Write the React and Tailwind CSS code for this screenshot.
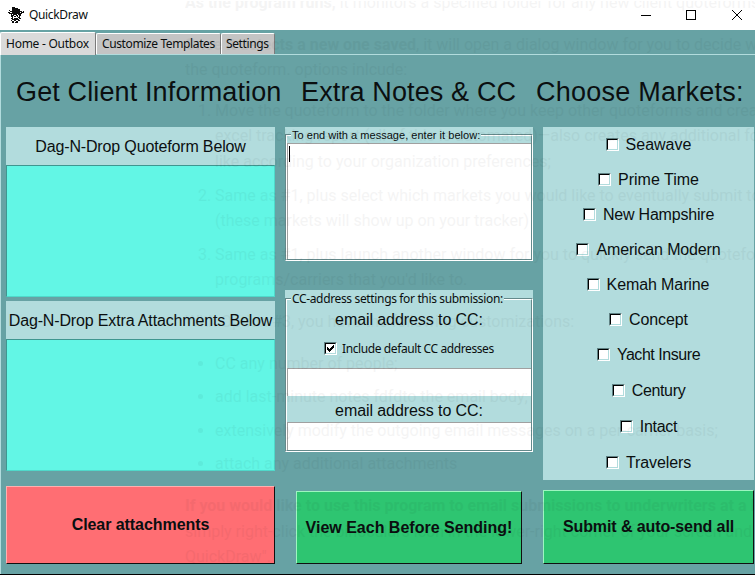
import React from "react";

const markets = [
  ["Seawave", "h-[35px]"],
  ["Prime Time", "h-[35px]"],
  ["New Hampshire", "h-[35px] tracking-[-0.2px]"],
  ["American Modern", "h-[35px] tracking-[-0.15px]"],
  ["Kemah Marine", "h-[35px] tracking-[-0.1px] pr-px"],
  ["Concept", "h-[35px] tracking-[-0.1px]"],
  ["Yacht Insure", "h-[35px] tracking-[-0.45px]"],
  ["Century", "h-[37px] tracking-[-0.35px]"],
  ["Intact", "h-[35px] tracking-[-0.3px]"],
  ["Travelers", "h-[37px] tracking-[-0.1px]"],
];

const cowboy = [
  "....###.........",
  "....######......",
  "....########....",
  ".#..########....",
  "..############.#",
  "##..########.###",
  ".#############..",
  "...#.####.###...",
  "...###..##.##...",
  "...##.##.#.#....",
  "....#.....##....",
  "...##.####.##...",
  "....#######.....",
  "...#..##..##....",
  "....##..##......",
  "....##.###......",
];

function CowboyIcon() {
  return (
    <svg viewBox="0 0 16 16" className="h-4 w-4" shapeRendering="crispEdges" fill="#0c0c0c">
      {cowboy.map((row, y) =>
        [...row].map((c, x) => (c === "#" ? <rect key={x + "-" + y} x={x} y={y} width="1" height="1" /> : null))
      )}
    </svg>
  );
}

function CheckBox({ checked }) {
  return (
    <span className="block h-[13px] w-[13px] shrink-0 border border-t-[#5f8183] border-l-[#5f8183] border-r-white border-b-white">
      <span className="block h-[11px] w-[11px] border border-t-black border-l-black border-r-[#b2dcdd] border-b-[#b2dcdd] bg-white">
        {checked && (
          <svg viewBox="0 0 9 9" className="block h-[9px] w-[9px]" shapeRendering="crispEdges">
            <path d="M1 3h1v1h1v1h1v-1h1v-1h1v-1h1v-1h1v3h-1v1h-1v1h-1v1h-1v1h-1v-1h-1v-1h-1z" fill="#000" />
          </svg>
        )}
      </span>
    </span>
  );
}

// Etched frame: a dark line with a white line just inside it.
function Groove({ title, titleClass, children, className }) {
  return (
    <section className={"bg-[#b2dcdd] relative " + className}>
      <div className="h-full border border-t-[#64898b] border-l-[#64898b] border-r-white border-b-white">
        <div className="h-full border border-t-white border-l-white border-r-[#64898b] border-b-[#64898b]">
          {children}
        </div>
      </div>
      <span className={"absolute left-[6px] bg-[#b2dcdd] whitespace-nowrap " + titleClass}>{title}</span>
    </section>
  );
}

function DropZone({ title }) {
  return (
    <section>
      <div className="flex h-[38px] items-center justify-center bg-[#b2dcdd] pt-[2px] text-[16px] tracking-[-0.15px] whitespace-nowrap">
        {title}
      </div>
      <div className="h-[132px] border border-t-[#3f9690] border-l-[#3f9690] border-r-[#4fd9ca] border-b-[#4fd9ca] bg-[#62f6e5]" />
    </section>
  );
}

function Button({ children, className }) {
  return (
    <button className={"block shrink-0 border border-r-[#101010] border-b-[#101010] text-[16px] font-bold whitespace-nowrap " + className}>
      {children}
    </button>
  );
}

function Ghost({ top, left = "left-[185px]", className = "", children }) {
  return <div className={"absolute leading-5 whitespace-nowrap " + top + " " + left + " " + className}>{children}</div>;
}

function Bullet({ top }) {
  return <div className={"absolute left-[198px] h-[5px] w-[5px] rounded-full bg-black " + top} />;
}

export default function App() {
  return (
    <div className="relative h-[579px] w-[755px] overflow-hidden bg-white font-['Liberation_Sans',Arial,sans-serif] text-[#0b0f10]">
      <header className="flex h-[30px] items-center pl-[8px]">
        <CowboyIcon />
        <span className="ml-[5px] font-['Noto_Sans',sans-serif] text-[12px] tracking-[-0.35px]">QuickDraw</span>
        <svg viewBox="0 0 110 14" className="ml-auto mr-[12px] h-[14px] w-[110px]" fill="none" stroke="#000" strokeWidth="1">
          <path d="M8 7.5h10M53.500 2.500h9v9h-9z" shapeRendering="crispEdges" />
          <path d="M99 2l10 10M109 2l-10 10" />
        </svg>
      </header>
      <main className="h-[545px] border-b border-black bg-[#67a2a4]">
        <nav className="flex h-[25px] items-end font-['Noto_Sans',sans-serif] text-[12px]">
          <span className="flex h-[23px] w-[96px] items-center rounded-t-[2px] border-t border-r border-l border-t-white border-l-white border-r-[#7b7b7b] bg-[#dadada] pl-[5px] tracking-[-0.25px] whitespace-nowrap">
            Home - Outbox
          </span>
          <div className="flex h-[22px] flex-1 border-b border-[#b2dcdd]">
            <span className="flex w-[125px] items-center rounded-t-[2px] border-t border-r border-l border-t-white border-l-white border-r-[#7b7b7b] bg-[#c4c4c4] pl-[5px] tracking-[-0.38px] whitespace-nowrap">
              Customize Templates
            </span>
            <span className="flex w-[54px] items-center rounded-t-[2px] border-t border-r border-l border-t-white border-l-white border-r-[#7b7b7b] bg-[#c4c4c4] pl-[4px] tracking-[-0.38px] whitespace-nowrap">
              Settings
            </span>
          </div>
        </nav>
        <div className="h-[519px] border-l border-[#b2dcdd] pl-[5px]">
          <div className="flex h-[72px] items-center pt-[2px] text-[27px] tracking-[0.13px] whitespace-nowrap">
            <h1 className="ml-[10px] w-[285px]">Get Client Information</h1>
            <h1 className="w-[235px]">Extra Notes &amp; CC</h1>
            <h1 className="tracking-[0.25px]">Choose Markets:</h1>
          </div>
          <div className="flex gap-[10px]">
            <div className="w-[269px]">
              <DropZone title="Dag-N-Drop Quoteform Below" />
              <div className="h-[4px]" />
              <DropZone title="Dag-N-Drop Extra Attachments Below" />
              <Button className="mt-[15px] h-[78px] w-[269px] border-t-[#ffb0b0] border-l-[#ffb0b0] bg-[#ff6e73] tracking-[-0.06px]">Clear attachments</Button>
            </div>
            <div className="w-[248px]">
              <Groove
                title="To end with a message, enter it below:"
                className="h-[134px] pt-[7px]"
                titleClass="top-[2px] px-px text-[11px] leading-[13px] tracking-[0.03px]"
              >
                <div className="h-[7px]" />
                <div className="h-[116px] border-t border-l border-[#a0a0a0] bg-white pt-[2px] pl-px">
                  <div className="h-4 w-px bg-black" />
                </div>
              </Groove>
              <Groove
                title="CC-address settings for this submission:"
                className="mt-[29px] h-[162px] pt-[8px]"
                titleClass="top-[2px] px-px font-['Noto_Sans',sans-serif] text-[12px] leading-[14px] tracking-[-0.35px]"
              >
                <div className="flex h-[38px] items-center justify-center pt-[2px] text-[16px] tracking-[-0.08px]">email address to CC:</div>
                <div className="flex h-[20px] items-center pl-[37px]">
                  <CheckBox checked />
                  <span className="ml-[5px] pt-px font-['Noto_Sans',sans-serif] text-[12px] tracking-[-0.4px] whitespace-nowrap">Include default CC addresses</span>
                </div>
                <div className="mt-[10px] h-[28px] border-t border-l border-[#a0a0a0] bg-white" />
                <div className="flex h-[26px] items-center justify-center pt-[4px] text-[16px] tracking-[-0.08px]">email address to CC:</div>
                <div className="h-[28px] border-t border-l border-[#a0a0a0] bg-white" />
              </Groove>
              <Button className="mt-[39px] ml-[11px] h-[73px] w-[226px] border-t-[#9df5c0] border-l-[#9df5c0] bg-[#2ec571]">View Each Before Sending!</Button>
            </div>
            <div className="w-[211px]">
              <section className="h-[353px] bg-[#b2dcdd]">
                {markets.map(([name, style]) => (
                  <div key={name} className={"flex items-center justify-center gap-[7px] text-[16px] whitespace-nowrap " + style}>
                    <CheckBox />
                    <span>{name}</span>
                  </div>
                ))}
              </section>
              <Button className="mt-[10px] h-[74px] w-[211px] border-t-[#9df5c0] border-l-[#9df5c0] bg-[#2ec571] tracking-[-0.1px]">Submit &amp; auto-send all</Button>
            </div>
          </div>
        </div>
      </main>
      {/* Faint document showing through the translucent window */}
      <div className="pointer-events-none absolute inset-x-0 top-px h-[573px] overflow-hidden font-['Roboto',sans-serif] text-[16px] text-black opacity-[0.04]">
        <Ghost top="top-[-8px]"><b>As the program runs,</b> it monitors a specified folder for any new client quoteforms</Ghost>
        <Ghost top="top-[34px]"><b>Once it detects a new one saved</b>, it will open a dialog window for you to decide w</Ghost>
        <Ghost top="top-[59px]">the quoteform. options inlcude:</Ghost>
        <Ghost top="top-[100px]" left="left-[198px]">1.</Ghost>
        <Ghost top="top-[100px]" left="left-[215px]">Move the quoteform to the folder where you keep other quoteforms and crea</Ghost>
        <Ghost top="top-[125px]" left="left-[215px]">excel tracking report (all of this is automated)—also creates any additional fo</Ghost>
        <Ghost top="top-[151px]" left="left-[215px]">like according to your organization preferences;</Ghost>
        <Ghost top="top-[185px]" left="left-[198px]">2.</Ghost>
        <Ghost top="top-[185px]" left="left-[215px]">Same as #1, plus select which markets you would like to eventually submit to</Ghost>
        <Ghost top="top-[210px]" left="left-[215px]">(these markets will show up on your tracker)</Ghost>
        <Ghost top="top-[244px]" left="left-[198px]">3.</Ghost>
        <Ghost top="top-[244px]" left="left-[215px]">Same as #1, plus launch another window for you to quickly send the quotefo</Ghost>
        <Ghost top="top-[269px]" left="left-[215px]">programs/carriers that you'd like to.</Ghost>
        <Ghost top="top-[311px]">With Option #3, you have the following customizations:</Ghost>
        <Bullet top="top-[360px]" />
        <Ghost top="top-[353px]" left="left-[215px]">CC any number of people;</Ghost>
        <Bullet top="top-[393px]" />
        <Ghost top="top-[386px]" left="left-[215px]">add last-minute notes fdfdto the email body;</Ghost>
        <Bullet top="top-[427px]" />
        <Ghost top="top-[420px]" left="left-[215px]">extensively modify the outgoing email messages on a per-carrier basis;</Ghost>
        <Bullet top="top-[460px]" />
        <Ghost top="top-[453px]" left="left-[215px]">attach any additional attachments</Ghost>
        <Ghost top="top-[495px]" className="font-bold">If you would like to use this program to email submissions to underwriters at a l</Ghost>
        <Ghost top="top-[521px]">simply right-click the binoculars icon in the lower-right corner of your screen and</Ghost>
        <Ghost top="top-[546px]">QuickDraw".</Ghost>
      </div>
    </div>
  );
}
